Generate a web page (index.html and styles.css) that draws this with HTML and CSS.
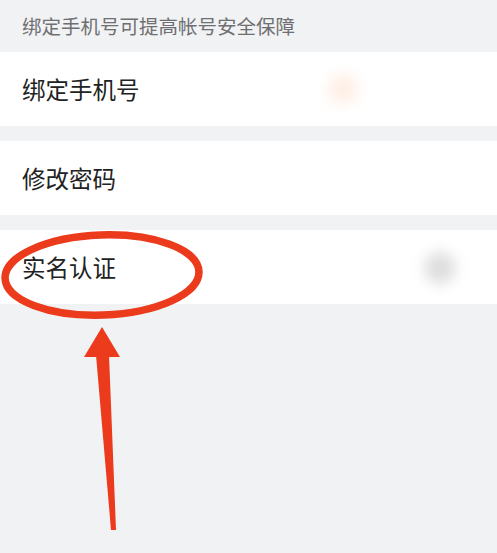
FILE: index.html
```html
<!DOCTYPE html>
<html lang="zh-CN">
<head>
<meta charset="utf-8">
<title>账号与安全</title>
<link rel="stylesheet" href="styles.css">
</head>
<body>
<div class="page">
  <div class="hint">绑定手机号可提高帐号安全保障</div>
  <div class="list">
    <div class="row"><span class="label">绑定手机号</span><span class="blur blur-orange"></span></div>
    <div class="row"><span class="label">修改密码</span></div>
    <div class="row"><span class="label">实名认证</span><span class="blur blur-gray"></span></div>
  </div>
  <svg class="mark" width="497" height="553" viewBox="0 0 497 553" xmlns="http://www.w3.org/2000/svg">
    <ellipse cx="102" cy="275" rx="97" ry="40" transform="rotate(-2 102 275)" fill="none" stroke="#ec3a1c" stroke-width="7.5"/>
    <polygon points="102,327 120,357 84,357" fill="#ec3a1c"/>
    <polygon points="96,355 109,355 116,530 111,530" fill="#ec3a1c"/>
  </svg>
</div>
</body>
</html>
```
FILE: styles.css
```css
html, body {
  margin: 0;
  padding: 0;
  background: #f1f2f4;
}
.page {
  position: relative;
  width: 497px;
  height: 553px;
  overflow: hidden;
  font-family: "Noto Sans CJK SC", "Noto Sans", sans-serif;
}
.hint {
  height: 52px;
  display: flex;
  align-items: center;
  padding-left: 22px;
  font-size: 19.5px;
  color: #6f6f72;
  padding-bottom: 2px;
  box-sizing: border-box;
}
.list {
  display: flex;
  flex-direction: column;
  gap: 15px;
}
.row {
  position: relative;
  height: 74px;
  background: #ffffff;
  display: flex;
  align-items: center;
  padding-left: 22px;
}
.label {
  font-size: 23.5px;
  color: #222222;
}
.blur {
  position: absolute;
  border-radius: 50%;
  filter: blur(7px);
}
.blur-orange {
  left: 328px;
  top: 22px;
  width: 30px;
  height: 30px;
  background: rgba(255, 190, 150, 0.25);
}
.blur-gray {
  left: 424px;
  top: 22px;
  width: 32px;
  height: 32px;
  background: rgba(200, 200, 200, 0.6);
}
.mark {
  position: absolute;
  left: 0;
  top: 0;
}
```
